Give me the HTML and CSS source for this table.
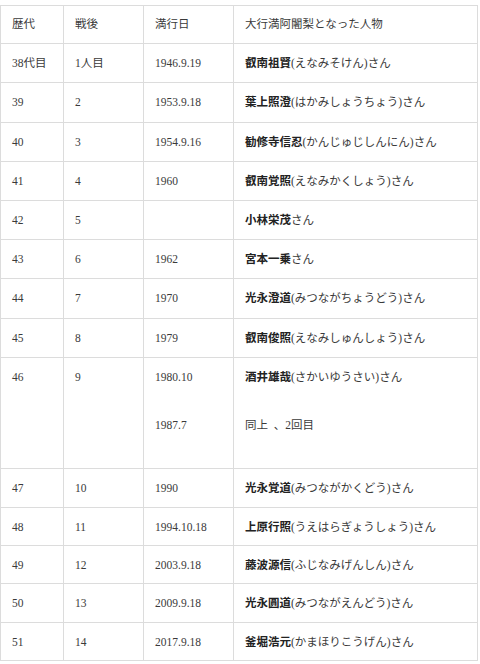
FILE: index.html
```html
<!DOCTYPE html>
<html lang="ja">
<head>
<meta charset="utf-8">
<link rel="stylesheet" href="styles.css">
</head>
<body>
<table class="tbl">
<colgroup><col class="c1"><col class="c2"><col class="c3"><col class="c4"></colgroup>
<tr><td>歴代</td><td>戦後</td><td>満行日</td><td>大行満阿闍梨となった人物</td></tr>
<tr><td>38代目</td><td>1人目</td><td>1946.9.19</td><td><b>叡南祖賢</b>(えなみそけん)さん</td></tr>
<tr><td>39</td><td>2</td><td>1953.9.18</td><td><b>葉上照澄</b>(はかみしょうちょう)さん</td></tr>
<tr><td>40</td><td>3</td><td>1954.9.16</td><td><b>勧修寺信忍</b>(かんじゅじしんにん)さん</td></tr>
<tr><td>41</td><td>4</td><td>1960</td><td><b>叡南覚照</b>(えなみかくしょう)さん</td></tr>
<tr><td>42</td><td>5</td><td></td><td><b>小林栄茂</b>さん</td></tr>
<tr><td>43</td><td>6</td><td>1962</td><td><b>宮本一乗</b>さん</td></tr>
<tr><td>44</td><td>7</td><td>1970</td><td><b>光永澄道</b>(みつながちょうどう)さん</td></tr>
<tr><td>45</td><td>8</td><td>1979</td><td><b>叡南俊照</b>(えなみしゅんしょう)さん</td></tr>
<tr><td>46</td><td>9</td><td><div>1980.10</div><div class="second">1987.7</div></td><td><div><b>酒井雄哉</b>(さかいゆうさい)さん</div><div class="second">同上&nbsp; 、2回目</div></td></tr>
<tr class="late"><td>47</td><td>10</td><td>1990</td><td><b>光永覚道</b>(みつながかくどう)さん</td></tr>
<tr class="late"><td>48</td><td>11</td><td>1994.10.18</td><td><b>上原行照</b>(うえはらぎょうしょう)さん</td></tr>
<tr class="late"><td>49</td><td>12</td><td>2003.9.18</td><td><b>藤波源信</b>(ふじなみげんしん)さん</td></tr>
<tr class="late"><td>50</td><td>13</td><td>2009.9.18</td><td><b>光永圓道</b>(みつながえんどう)さん</td></tr>
<tr class="late"><td>51</td><td>14</td><td>2017.9.18</td><td><b>釜堀浩元</b>(かまほりこうげん)さん</td></tr>
</table>
</body>
</html>
```
FILE: styles.css
```css
html, body {
  margin: 0;
  padding: 0;
  background: #fff;
}
body {
  padding-top: 5px;
  font-family: "Liberation Serif", "Noto Sans CJK SC", "Noto Sans CJK JP", sans-serif;
  font-size: 11.5px;
  color: #3a3a3a;
}
.tbl {
  border-collapse: collapse;
  table-layout: fixed;
  width: 477px;
}
.c1 { width: 63px; }
.c2 { width: 80px; }
.c3 { width: 90px; }
.c4 { width: 244px; }
.tbl td {
  border: 1px solid #dcdcdc;
  padding: 11px 11px 10px 11px;
  line-height: 17.2px;
  vertical-align: top;
  white-space: nowrap;
}
.tbl tr:first-child td {
  padding-top: 10px;
}
.tbl tr.late td {
  line-height: 16.4px;
}
.tbl b {
  font-weight: bold;
  color: #222;
}
.second {
  margin-top: 31px;
  margin-bottom: 24px;
}
```
